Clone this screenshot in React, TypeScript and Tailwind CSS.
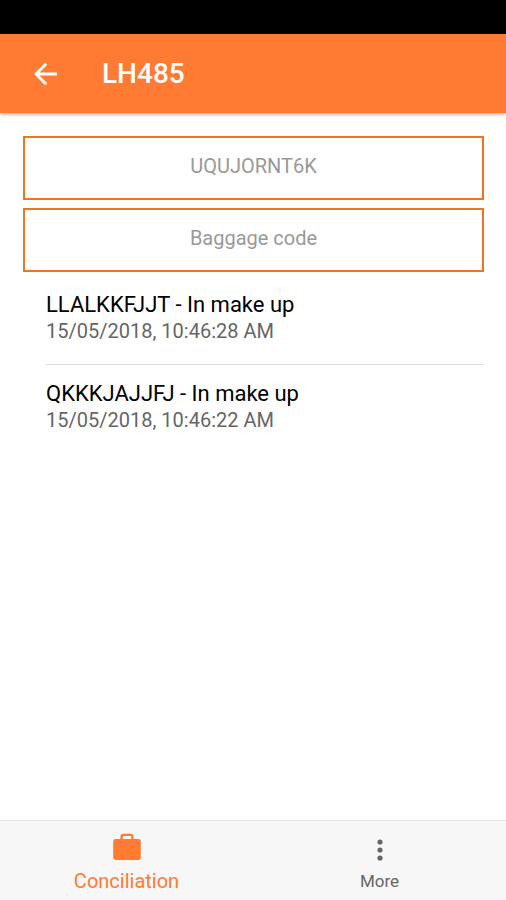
import type { ReactNode } from 'react';

const ITEMS = [
  { code: 'LLALKKFJJT', status: 'In make up', date: '15/05/2018, 10:46:28 AM' },
  { code: 'QKKKJAJJFJ', status: 'In make up', date: '15/05/2018, 10:46:22 AM' },
];

function CodeField({ label, placeholder, value }: { label: string; placeholder?: string; value?: string }) {
  return (
    <input
      type="text"
      aria-label={label}
      placeholder={placeholder}
      defaultValue={value}
      className="h-16 w-full border-2 border-[#ee7623] bg-white pb-1 text-center text-xl text-[#999999] outline-none placeholder:text-[#999999]"
    />
  );
}

function Tab({ label, active, children }: { label: string; active?: boolean; children: ReactNode }) {
  return (
    <button
      type="button"
      className={`flex flex-1 flex-col items-center pt-3 ${active ? 'text-xl text-[#ff7a33]' : 'text-[17px] text-[#666666]'}`}
    >
      {children}
      <span className="mt-1 leading-7">{label}</span>
    </button>
  );
}

export default function App() {
  return (
    <div className="flex min-h-screen flex-col bg-white font-['Roboto',sans-serif]">
      <div className="h-[34px] bg-black" />

      <header className="flex h-[79px] items-center gap-10 bg-[#ff7a33] px-7 text-white shadow-[0_1px_4px_rgba(0,0,0,0.4)]">
        <button type="button" aria-label="Back">
          <svg
            viewBox="0 0 34 34"
            className="size-[34px]"
            fill="none"
            stroke="currentColor"
            strokeWidth="2.8"
            strokeLinejoin="round"
            aria-hidden
          >
            <path d="M29 17H8.5M18.2 6.8L8 17l10.2 10.2" />
          </svg>
        </button>
        <h1 className="text-[28px] font-medium">LH485</h1>
      </header>

      <main className="flex-1 pt-[23px] pr-[22px] pl-[23px]">
        <div className="flex flex-col gap-2">
          <CodeField label="Container code" value="UQUJORNT6K" />
          <CodeField label="Baggage code" placeholder="Baggage code" />
        </div>

        <ul className="mt-1 ml-[23px] divide-y divide-[#dddddd]">
          {ITEMS.map(({ code, status, date }) => (
            <li key={code} className="pt-[15px] pb-[21px]">
              <h2 className="text-[22px] leading-7 text-black">
                {code} - {status}
              </h2>
              <p className="text-xl leading-6 text-[#666666]">{date}</p>
            </li>
          ))}
        </ul>
      </main>

      <nav className="flex h-20 border-t border-[#e4e4e4] bg-[#f7f7f7]">
        <Tab label="Conciliation" active>
          <svg viewBox="0 0 30 30" className="size-[30px]" fill="currentColor" aria-hidden>
            <rect x="1.2" y="6" width="27.6" height="21" rx="2.4" />
            <path
              d="M9.6 7V3.6Q9.6 1.9 11.3 1.9h7.4q1.7 0 1.7 1.7V7"
              fill="none"
              stroke="currentColor"
              strokeWidth="2.4"
            />
          </svg>
        </Tab>
        <Tab label="More">
          <svg viewBox="0 0 30 30" className="size-[30px]" fill="currentColor" aria-hidden>
            <circle cx="15" cy="9" r="2.6" />
            <circle cx="15" cy="17" r="2.6" />
            <circle cx="15" cy="25" r="2.6" />
          </svg>
        </Tab>
      </nav>
    </div>
  );
}
